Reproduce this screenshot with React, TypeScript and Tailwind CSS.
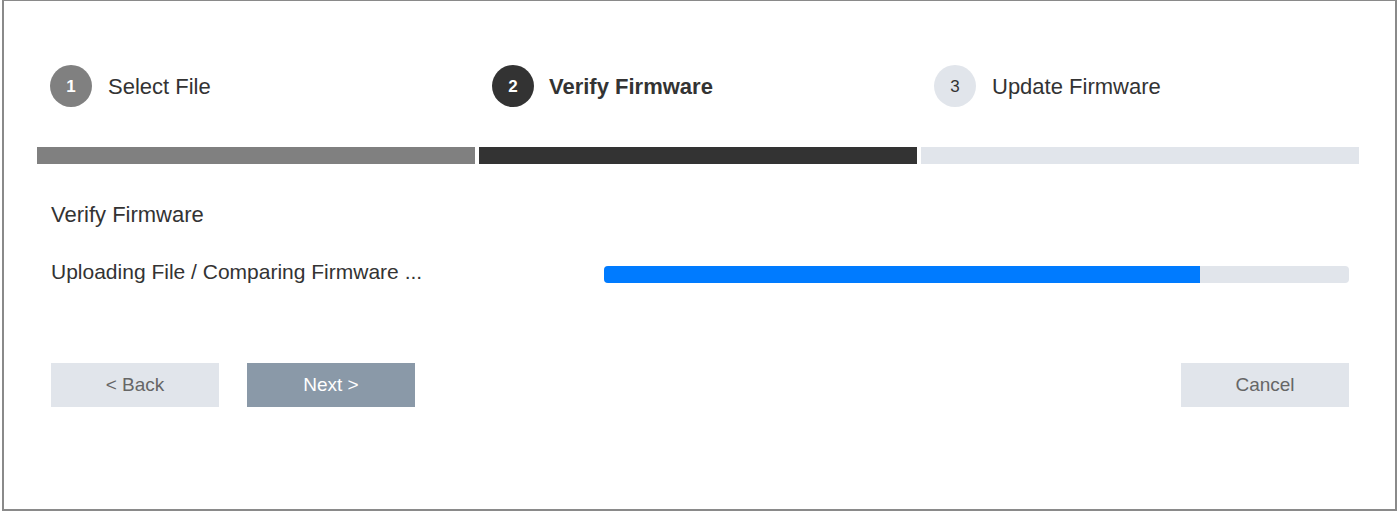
const steps = [
  { n: 1, label: "Select File", state: "done" },
  { n: 2, label: "Verify Firmware", state: "active" },
  { n: 3, label: "Update Firmware", state: "todo" },
] as const;

function StepHeader() {
  return (
    <div className="ml-[33px] grid w-[1322px] grid-cols-3 gap-x-[4px]">
      {steps.map((s) => (
        <div key={s.n} className="flex h-[42px] items-center pl-[13px]">
          <div
            className={
              s.state === "done"
                ? "flex h-[42px] w-[42px] items-center justify-center rounded-full bg-[#808080] pt-[2px] text-[17px] font-bold text-white"
                : s.state === "active"
                  ? "flex h-[42px] w-[42px] items-center justify-center rounded-full bg-[#333333] pt-[2px] text-[17px] font-bold text-white"
                  : "flex h-[42px] w-[42px] items-center justify-center rounded-full bg-[#e1e5eb] pt-[2px] text-[17px] text-[#333333]"
            }
          >
            {s.n}
          </div>
          <span
            className={
              s.state === "active"
                ? "ml-[15px] text-[22px] font-bold text-[#333333]"
                : "ml-[16px] text-[22px] text-[#333333]"
            }
          >
            {s.label}
          </span>
        </div>
      ))}
      <div className="mt-[40px] h-[17px] bg-[#808080]" />
      <div className="mt-[40px] h-[17px] bg-[#333333]" />
      <div className="mt-[40px] h-[17px] bg-[#e1e5eb]" />
    </div>
  );
}

export default function App() {
  const progress = 80;

  return (
    <div className="h-[515px] w-[1399px] bg-white font-['Liberation_Sans',Arial,sans-serif]">
      <div className="ml-[2px] h-[511px] w-[1395px] border-2 border-t border-[#8a8a8a] bg-white">
        <div className="pt-[64px]">
          <StepHeader />
        </div>

        <div className="pl-[47px] pr-[46px]">
          <h2 className="mt-[38px] text-[22px] leading-[26px] text-[#333333]">
            Verify Firmware
          </h2>

          <div className="mt-[31px] flex h-[30px] items-center">
            <span className="-mt-[4px] w-[553px] text-[21px] leading-[26px] text-[#333333]">
              Uploading File / Comparing Firmware ...
            </span>
            <div className="h-[17px] w-[745px] overflow-hidden rounded-[4px] bg-[#e1e5eb]">
              <div
                className="h-full bg-[#007bff]"
                style={{ width: `${progress}%` }}
              />
            </div>
          </div>

          <div className="mt-[74px] flex items-center">
            <button className="h-[44px] w-[168px] bg-[#e1e5eb] text-[19px] text-[#666666]">
              &lt; Back
            </button>
            <button className="ml-[28px] h-[44px] w-[168px] bg-[#8a99a8] text-[19px] text-white">
              Next &gt;
            </button>
            <button className="ml-auto h-[44px] w-[168px] bg-[#e1e5eb] text-[19px] text-[#666666]">
              Cancel
            </button>
          </div>
        </div>
      </div>
    </div>
  );
}
